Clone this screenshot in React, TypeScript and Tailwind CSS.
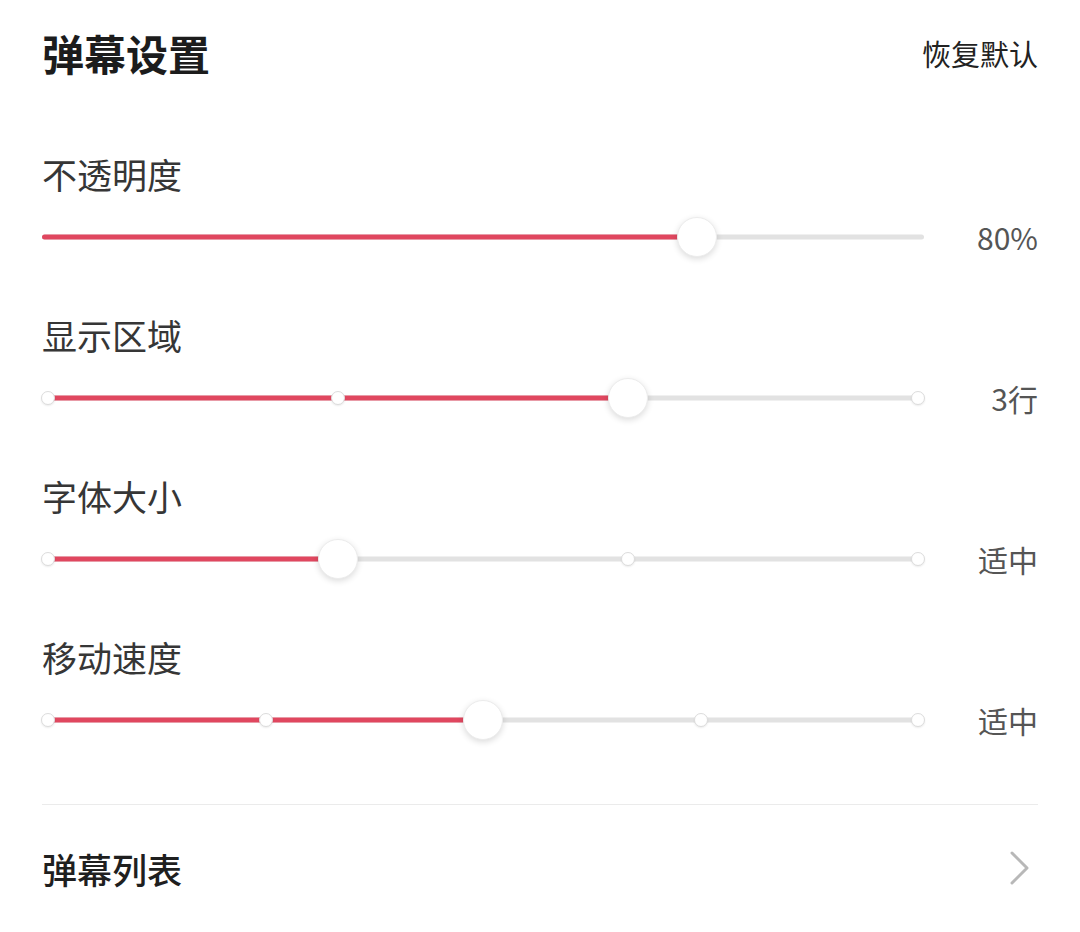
import React from "react";

interface SliderRowProps {
  label: string;
  value: string;
  // thumb position, 0..1 along the track
  position: number;
  steps?: number;
}

const RED = "bg-[#e0475f]";

const SliderRow: React.FC<SliderRowProps> = ({ label, value, position, steps }) => {
  const dots = steps ? Array.from({ length: steps }, (_, i) => i / (steps - 1)) : [];
  const inset = steps ? 6 : 0;

  return (
    <div className="flex flex-col">
      <div className="flex h-[48px] items-center text-[35px] leading-none text-[#363636]">{label}</div>
      <div className="flex h-[80px] items-center">
        <div className="relative h-[44px] flex-1">
          <div
            className="absolute top-1/2 h-[5px] -translate-y-1/2 rounded-full bg-[#e2e2e2]"
            style={{ left: inset, right: inset }}
          />
          <div
            className={`absolute top-1/2 h-[5px] -translate-y-1/2 rounded-full ${RED}`}
            style={{ left: inset, width: `calc((100% - ${inset * 2}px) * ${position})` }}
          />
          {dots.map((d, i) => (
            <div
              key={i}
              className="absolute top-1/2 h-[14px] w-[14px] -translate-x-1/2 -translate-y-1/2 rounded-full border border-[#dcdcdc] bg-white shadow-[0_1px_2px_rgba(0,0,0,0.08)]"
              style={{ left: `calc(${inset}px + (100% - ${inset * 2}px) * ${d})` }}
            />
          ))}
          <div
            className="absolute top-1/2 h-[40px] w-[40px] -translate-x-1/2 -translate-y-1/2 rounded-full border border-[#ececec] bg-white shadow-[0_2px_6px_rgba(0,0,0,0.14)]"
            style={{ left: `calc(${inset}px + (100% - ${inset * 2}px) * ${position})` }}
          />
        </div>
        <div className="w-[114px] text-right text-[30px] leading-none text-[#555]">{value}</div>
      </div>
    </div>
  );
};

export default function App() {
  const rows: SliderRowProps[] = [
    { label: "不透明度", value: "80%", position: 0.743 },
    { label: "显示区域", value: "3行", position: 2 / 3, steps: 4 },
    { label: "字体大小", value: "适中", position: 1 / 3, steps: 4 },
    { label: "移动速度", value: "适中", position: 0.5, steps: 5 },
  ];

  return (
    <div
      className="h-[932px] w-[1080px] bg-white px-[42px]"
      style={{ fontFamily: '"Noto Sans CJK SC", "Noto Sans", sans-serif' }}
    >
      {/* Header */}
      <div className="flex h-[106px] items-center justify-between">
        <h1 className="text-[42px] font-bold leading-none text-[#1c1c1c]">弹幕设置</h1>
        <button className="text-[29px] leading-none text-[#222]">恢复默认</button>
      </div>

      {/* Sliders */}
      <div className="mt-[43px] flex flex-col gap-[33px]">
        {rows.map((row, i) => (
          <SliderRow key={i} {...row} />
        ))}
      </div>

      <div className="mt-[44px] h-px bg-[#ebebeb]" />

      {/* List link */}
      <div className="flex h-[126px] items-center justify-between">
        <span className="text-[35px] font-medium leading-none text-[#1f1f1f]">弹幕列表</span>
        <svg width="24" height="36" viewBox="0 0 24 36" className="mr-[6px]">
          <polyline points="4,3 19,18 4,33" fill="none" stroke="#b8b8b8" strokeWidth="3" strokeLinecap="round" strokeLinejoin="round" />
        </svg>
      </div>
    </div>
  );
}
